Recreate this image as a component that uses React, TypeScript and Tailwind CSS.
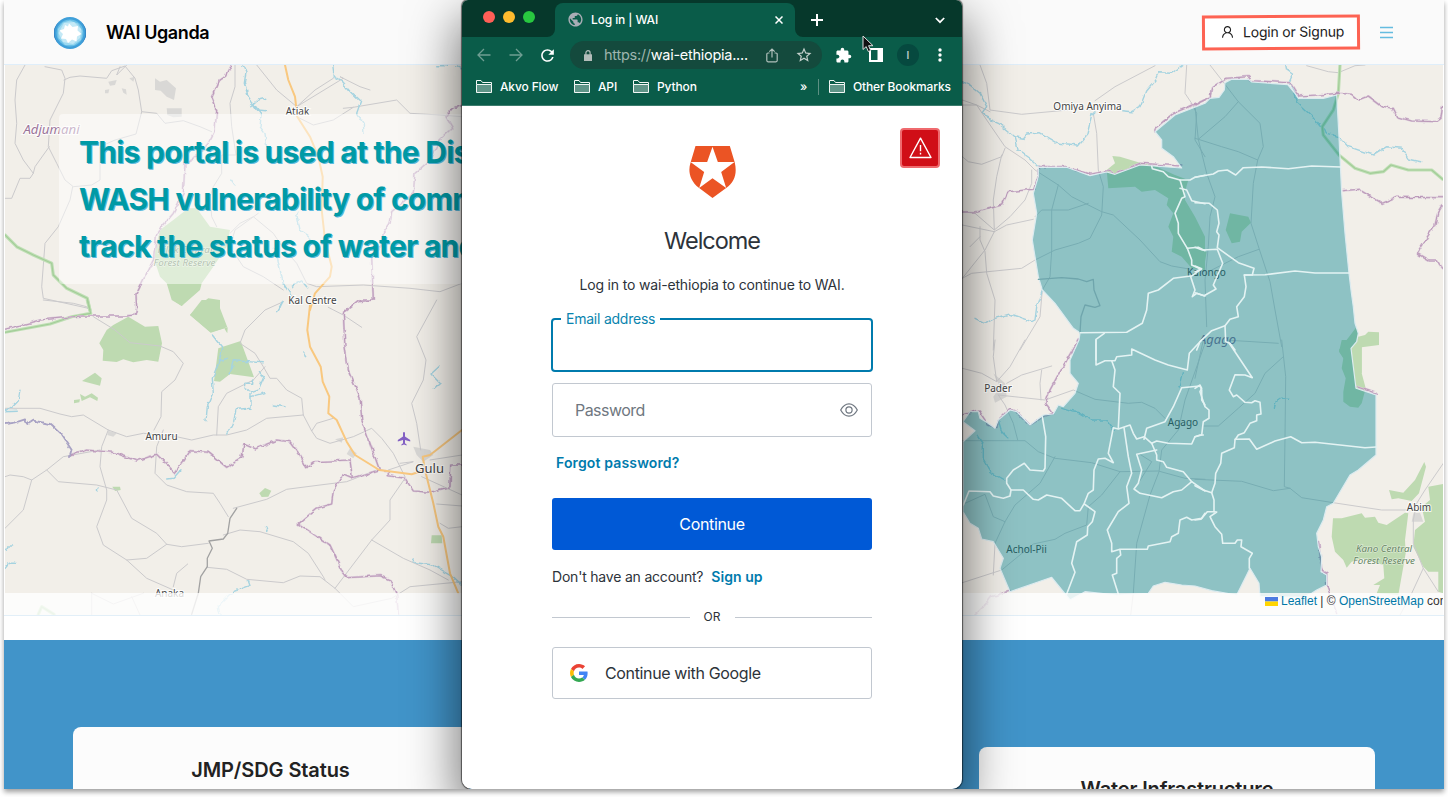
import React from "react";
import { MdExtension, MdRefresh, MdStarBorder, MdPublic } from "react-icons/md";
import { AiOutlineUser } from "react-icons/ai";

/* Map geometry: every tile has its origin in page pixels and stores points at three units per pixel. */
type Origin = [number, number];
const A: Origin = [0, 0];
const B: Origin = [0, 300];
const C: Origin = [955, 60];
const D: Origin = [1195, 60];
const E: Origin = [955, 340];
const F: Origin = [1195, 340];

const at = ([ox, oy]: Origin, pts: string) =>
  pts
    .trim()
    .split(/\s+/)
    .map((p) => {
      const [x, y] = p.split(",").map(Number);
      return `${(ox + x / 3).toFixed(1)},${(oy + y / 3).toFixed(1)}`;
    })
    .join(" ");

type Shape = [Origin, string];

const forests: Shape[] = [
  [A, "565,625 590,625 630,680 690,690 680,740 640,800 605,850 600,870 545,918 515,900 500,850 480,830 460,770 480,690 520,660"],
  [A, "590,920 625,895 660,900 660,965 682,1000 683,982 632,998 570,945 600,915"],
  [B, "570,45 605,0 660,0 660,25 682,82 632,97"],
  [B, "520,0 560,0 545,18"],
  [B, "340,75 385,50 435,80 475,78 486,130 475,185 440,180 400,187 370,178 350,186 308,182 310,150 298,130 320,90"],
  [B, "655,145 722,123 762,232 690,222 660,245 642,243"],
  [B, "246,243 285,218 305,235 300,257"],
  [B, "240,282 255,290 275,280 294,293 292,303 270,292 245,303"],
  [B, "222,300 240,298 238,307 222,310"],
  [B, "778,580 795,564 814,572 805,590 785,591"],
  [B, "337,560 360,560 362,570 345,573"],
  [B, "1295,706 1325,706 1327,730 1293,730"],
  [C, "455,330 480,310 472,288 495,290 520,298 555,308 600,318 660,345 700,360 690,395 690,420 720,470 750,530 750,630 710,625 680,590 650,575 655,530 640,500 655,460 635,435 640,415 600,390 560,395 540,380 460,385"],
  [D, "0,510 20,515 22,550 10,570 35,575 30,605 0,625"],
  [D, "105,460 160,470 168,488 140,515 135,545 110,550 92,510"],
  [D, "432,870 485,800 490,830 510,825 520,815 552,817 552,855 500,862 500,940 470,940"],
  [F, "440,0 500,0 500,100 512,145 500,190 490,203 465,200 445,185 445,155 452,115 440,85 445,55 432,35"],
  [F, "582,450 625,458 660,420 688,366 693,380 672,460 650,483 610,475 590,478"],
  [F, "414,535 440,535 500,520 510,533 540,530 550,548 575,555 630,518 640,520 630,600 632,640 610,765 545,760 555,735 535,735 568,715 565,675 500,655 470,665 455,683 445,660 420,635 410,590"],
  [F, "680,500 705,480 700,440 745,432 745,760 730,755 730,695 700,695 685,680 655,620 660,570 690,545"],
];

const builtUp: Shape[] = [
  [A, "465,235 480,245 500,240 528,265 522,300 500,290 482,272 465,270"],
  [A, "500,325 545,325 545,350 520,352 502,345"],
  [A, "325,245 350,240 345,255 330,257"],
  [A, "315,270 328,268 325,280 315,280"],
  [A, "365,265 378,268 380,284 370,278"],
  [A, "388,235 405,230 400,245"],
  [B, "1240,440 1290,450 1300,465 1270,485 1250,465"],
  [B, "1050,445 1070,460 1060,475 1040,462"],
  [B, "325,392 350,400 340,410 322,405"],
  [B, "1005,418 1030,412 1025,428"],
  [E, "115,100 150,130 155,170 120,188 115,170 135,140"],
  [F, "655,520 675,518 685,545 650,545"],
];

const roads: Shape[] = [
  [A, "75,195 50,240 45,300 50,370 45,430 70,480 100,520 90,535 60,535 35,595 15,595"],
  [A, "135,200 185,210 195,235 190,280 150,360 145,440 170,490 195,540 220,560 275,555 300,540 300,440 345,420 408,402 425,335 415,270 405,235 375,198 335,212 320,235 240,228 210,232 192,240"],
  [A, "425,335 470,340 495,370 550,362 600,380 635,395"],
  [A, "148,440 130,465 105,500 100,520"],
  [A, "218,560 210,600 175,680 135,730 125,860 130,895 265,925"],
  [A, "705,195 705,260 690,310 695,380 708,465 665,465 665,520 640,560 630,590 635,650 650,680"],
  [A, "770,195 830,270 890,320 1030,235 1020,230 1080,260 1110,270"],
  [A, "1030,325 1060,322 1190,300 1230,340 1320,345 1386,350"],
  [A, "890,320 945,270 1000,235"],
  [A, "890,350 940,375 1000,360 1060,322"],
  [A, "690,700 720,670 760,650 820,700 850,745 890,790 920,850 950,860 1090,855 1230,865 1320,875 1386,850"],
  [A, "775,640 705,690 690,740 730,800 790,830 850,870"],
  [A, "360,200 350,225 380,195"],
  [B, "850,5 795,30 735,90 720,130 765,160 790,200 810,235 830,235 860,270 905,295 910,345 800,355 740,390 680,405 640,405 575,420 520,408 430,400 380,410 325,390 250,345 215,350 180,342 120,325 15,325"],
  [B, "910,345 935,393 950,370 1000,355"],
  [B, "935,393 950,415 990,430 1060,410 1115,385 1145,415 1180,460 1200,500 1215,530"],
  [B, "130,0 220,10 260,20 280,50 345,90 390,128 480,138 520,155 550,190 525,240 485,275 483,350 462,390"],
  [B, "490,390 470,440 465,520 500,555 560,575 640,580 660,610 685,650"],
  [B, "795,200 760,240 680,280 655,320 650,405"],
  [B, "325,390 305,440 300,500 320,570 320,600 290,680 310,735 380,780 440,835 520,870"],
  [B, "300,450 190,470 140,510 95,540 70,530 30,525 15,530"],
  [B, "95,540 70,630 15,685"],
  [B, "140,510 175,545 290,555 350,570 395,655 470,700 500,733 545,740 625,730"],
  [B, "380,780 440,775 500,733"],
  [B, "670,705 720,690 780,695 880,725 925,760 970,830 975,840"],
  [B, "620,802 680,808 740,838 850,848 900,828 960,830 1005,865 1115,720 1170,660 1170,600 1215,535"],
  [B, "1115,720 1210,775 1290,810 1345,840"],
  [B, "1005,865 1060,920 1175,895 1230,860 1386,845"],
  [B, "700,625 800,598 860,568 960,555 1040,545 1130,510"],
  [B, "1310,0 1250,110 1278,180 1270,240 1235,310 1250,370 1262,450"],
  [B, "985,22 1030,45 1085,82"],
  [B, "520,860 530,820 563,792"],
  [B, "275,880 275,945"],
  [B, "275,880 340,912 430,880"],
  [B, "395,890 420,945"],
  [B, "1290,480 1386,465"],
  [B, "1265,530 1386,585"],
  [B, "1200,490 1240,485 1165,510"],
  [B, "1310,612 1386,618"],
  [B, "1320,670 1345,685 1386,680"],
  [C, "75,15 95,70 105,150 200,163 340,150"],
  [C, "420,122 480,80 600,17"],
  [C, "22,120 65,135 95,180 150,260 210,300 240,330 310,375 350,410 440,455 475,465 555,540 615,605 650,618 750,635"],
  [C, "22,135 65,135 95,150 105,155"],
  [C, "22,290 40,305 80,313 140,290 150,265"],
  [C, "140,285 125,350 115,420 118,510 60,460 22,455"],
  [C, "118,515 90,570 22,655"],
  [C, "118,515 155,495 235,478"],
  [C, "118,510 165,470 210,420 230,370 230,330"],
  [C, "22,495 118,515"],
  [C, "75,500 75,540 90,575 95,640 120,720 115,870"],
  [C, "22,655 50,640 200,625 240,600 300,570 370,550 405,535 440,465 445,380 430,330 425,220 415,160"],
  [C, "310,375 290,450 290,570 285,650 262,690 255,770 195,870"],
  [C, "240,470 260,450 340,450 400,430"],
  [C, "695,15 690,100 710,130 725,160 720,240 750,290"],
  [C, "45,560 75,530"],
  [D, "45,15 80,60 130,125 195,190 205,260 188,300 175,370 168,490 192,565 225,665 240,750 260,860"],
  [D, "130,125 90,170 10,238 0,235"],
  [D, "10,238 80,260 130,275 188,300"],
  [D, "192,568 130,590 50,630"],
  [D, "0,140 10,238 35,340 60,410 45,470 40,560 30,660 35,800"],
  [D, "335,17 400,35 430,38 480,17 510,15"],
  [D, "90,840 250,850"],
  [F, "260,0 272,110 270,290 268,440 285,445 320,473 415,488 560,510 640,510"],
  [F, "0,418 140,424 235,452 285,445"],
  [F, "265,50 210,100 180,160 130,205 70,258 25,258"],
  [F, "25,0 0,115"],
  [F, "745,370 690,450 665,490 655,540 655,610 685,685 730,755"],
  [F, "685,685 650,760 615,825"],
  [E, "22,85 80,100 125,125 115,50 120,0"],
  [E, "125,125 165,80 210,0"],
  [E, "155,130 200,105 290,78"],
  [E, "260,90 255,130 258,180"],
  [E, "130,165 270,180 355,150 420,178 520,190 560,187 600,205 630,235"],
  [E, "130,165 150,195 175,250 188,300"],
  [E, "22,302 210,302 250,335 300,355 410,368 495,395 610,393 690,415 750,418"],
  [E, "300,350 255,430 180,495 150,545 120,610 115,705"],
  [E, "30,490 90,463 115,530 150,545"],
  [E, "495,395 440,465 400,500 395,555 330,580 300,598 235,612 140,690 22,728"],
  [E, "750,10 690,180 670,270 620,330 612,395 585,465 545,610 535,760 527,825"],
  [E, "550,430 590,365 550,340"],
];

const rivers: Shape[] = [
  [A, "728,195 738,215 733,250 745,290 765,320 783,345 780,380 795,400 800,440 812,470"],
  [A, "752,320 775,300 797,295"],
  [A, "760,310 775,330 797,332"],
  [A, "995,195 1000,230 1025,245 1055,280 1082,305 1070,340 1090,370 1092,398"],
  [A, "692,540 705,558"],
  [A, "820,745 832,770 838,800 850,850 875,890"],
  [A, "875,860 890,850 905,843 920,860"],
  [A, "850,905 840,925"],
  [A, "890,640 900,690 930,710 945,740"],
  [A, "1310,197 1340,197"],
  [A, "1370,197 1386,205"],
  [B, "845,10 830,35"],
  [B, "637,105 668,145 655,190 637,235 640,280 622,320 618,362"],
  [B, "655,182 682,175"],
  [B, "690,220 700,182 790,188"],
  [B, "780,215 793,235 780,265 755,275 735,265 738,250 755,250 755,240"],
  [B, "753,272 753,325 708,328 700,370 683,402"],
  [B, "753,290 795,278"],
  [B, "820,315 855,320"],
  [B, "912,155 917,170"],
  [B, "60,268 55,300 35,320 15,335 52,334"],
  [B, "1320,197 1293,222 1320,250 1303,265"],
  [B, "503,537 520,535 540,512"],
  [B, "292,573 297,563"],
  [B, "797,692 800,680"],
  [B, "15,752 25,738 38,738"],
  [B, "15,803 25,790 47,790"],
  [B, "660,943 655,920 670,905 700,875 750,857 745,842"],
  [B, "1235,775 1245,788 1300,795 1325,810 1360,830 1386,855"],
  [C, "22,65 45,75 75,100 95,140 85,155 95,175 130,190 180,230 190,270 225,295 250,318"],
  [C, "180,230 205,235 215,222 255,218 310,250 370,255 395,225 410,165 420,155"],
  [C, "500,152 530,155 555,140 575,90 600,60 610,38 650,40 680,17"],
  [C, "60,775 90,790 120,775 165,762 230,785 240,780 245,740 262,690"],
  [D, "272,15 275,30 293,43 282,68 300,100 307,125 350,165 395,220 432,230 460,260 535,285 575,260 620,265 640,297 677,305"],
  [E, "320,205 350,215 375,218 410,240 455,240 475,270"],
  [E, "65,285 85,315 85,360 105,395 150,420"],
  [E, "130,240 140,275 155,290"],
  [E, "685,98 675,140"],
  [F, "235,205 240,185 255,175 285,175"],
];

const greenBorders: Shape[] = [
  [A, "15,705 50,740 100,765 155,790 160,825 200,865 262,895 270,930"],
  [B, "262,0 272,40 215,50 150,72 15,97"],
  [D, "435,15 430,100 415,150 382,200 385,225 432,285 480,325 525,340 565,335 588,315 640,330 710,330 743,358"],
  [B, "115,943 125,920 162,943"],
];

const purpleBorders: Shape[] = [
  [A, "695,195 680,225 655,245 635,290 650,330 645,390 625,430 590,470 555,490 550,580 520,640 470,700 460,780 430,840 408,885 410,925 405,945 383,947"],
  [B, "383,48 245,48 120,60 15,88"],
  [A, "1386,315 1360,325 1338,350 1358,385 1320,420 1290,480 1245,520 1240,580 1175,635 1170,670 1150,700 1145,735 1115,770 1120,900 1075,905"],
  [B, "1120,0 1080,0 1030,40 1035,140 1045,210 1080,290 1085,360 1110,430 1138,508"],
  [B, "210,468 260,450 340,457 410,483 470,463 525,518 545,490 570,452 625,457 680,502 725,475 732,433 765,447 830,420 870,425 900,465 920,503 945,485 1050,480 1057,533 1138,510 1165,515 1165,527 1215,535 1240,573 1290,577 1350,560 1352,495 1386,495"],
  [B, "1057,533 1030,522 1000,570 995,612 950,625 895,672 990,735 1030,820 1040,833 1140,827 1170,840 1190,885 1195,945"],
  [C, "22,456 70,455 140,435 160,395 235,388 250,350 250,320 335,320 405,343 455,333 480,340 555,310 680,318"],
  [C, "600,215 600,205 655,160 750,120"],
  [D, "0,135 45,110 50,85 95,55 160,50 170,62 285,68 310,108 370,105 430,100 470,103 490,120 520,108 560,138 592,145 605,170 650,183 725,185 738,175 743,135"],
  [D, "445,392 490,388 562,430 605,412 743,413"],
  [D, "743,435 728,460 720,495 665,580 700,600 725,600 743,625"],
  [E, "370,0 320,85 285,150 272,190 295,220 265,230 225,255 185,215 165,205 130,240 125,265 100,255 70,210 22,225"],
  [E, "60,825 95,790 110,770 165,752"],
  [F, "485,140 543,160"],
  [F, "370,600 380,690 395,695 395,735 425,820"],
];

const region = [
  at(C, "250,322 335,322 405,347 455,336 480,343 555,315 680,324 655,290 620,265 620,240 600,215 660,165 750,130"),
  at(D, "45,115 72,112 88,90 90,68 110,58 160,58 170,66 278,74 300,100 310,115 385,115 425,105 432,230 440,400 450,520 462,640 468,690 475,740 480,790 490,820 485,845 468,865"),
  at(F, "483,145 543,165 543,345 490,390 465,405 415,490 395,500 385,540 365,580 370,620 380,650 378,695 395,705 395,735 365,750 350,760 320,772 195,770 192,730 165,685 155,705 125,765 50,752 0,738"),
  at(E, "680,735 630,727 595,738 580,760 485,765 390,755 345,780 290,712 165,755 135,685 145,655 115,605 80,597 70,565 45,550 24,515 24,305 60,272 24,245 45,215 70,215 75,235 100,250 120,265 130,240 165,210 185,215 225,255 265,225 295,222 310,195 325,200 360,160 370,130 345,100 345,60 372,0"),
  at(C, "375,818 355,805 300,730 262,690 250,650 240,590 232,540 245,460 235,400 250,350"),
].join(" ");

const subCounties: Shape[] = [
  [C, "590,318 592,326 625,335 640,350 675,360 705,360 720,352 750,346"],
  [D, "0,352 55,342 70,333 97,330 122,345 145,323 200,321 280,326 350,318 437,321"],
  [C, "675,360 690,410 680,415 660,460 670,490 670,520 697,565 710,600 710,615 738,628 707,650 720,690 712,710 725,700 750,708"],
  [C, "675,385 695,390 710,422 750,431"],
  [D, "0,428 43,430 67,450 72,490 65,515 72,525 67,563 130,608 177,625 172,645 148,645 153,680 148,710 125,740 130,770 105,778 90,797 50,812 15,845 5,870"],
  [C, "697,565 730,562 750,572"],
  [D, "0,562 22,570 67,568 83,610 55,675 63,687 27,707 0,698"],
  [D, "0,618 20,626 0,636"],
  [D, "148,645 210,644 300,633 360,639 462,639"],
  [D, "90,797 92,845 105,850 120,870"],
  [C, "707,648 655,655 610,690 580,700 575,750 562,790 515,817 375,818"],
  [C, "448,820 423,838 423,900"],
  [E, "423,0 423,75 450,62 480,62 485,50 530,45 530,27 600,60 640,75 697,90 703,40 735,5 740,0"],
  [E, "470,62 480,90 475,140 495,160 490,265"],
  [E, "262,230 272,290 270,385 265,393 225,390 208,370 175,390 155,415 155,430 168,450 165,468 145,475 115,468 105,455 42,453 25,495"],
  [E, "168,450 205,450 235,478 250,480 275,465 320,475 360,512 375,512 388,490 400,460 415,450 417,390 430,357 450,355 475,368 460,340 475,263 490,267 525,255 535,280 545,297 567,290 590,310"],
  [E, "507,263 520,350 530,400 515,440 522,490 490,515 457,570 470,610 470,635 495,628 577,628 580,618 645,605 650,590 670,580 675,540 695,532 710,540 740,535 750,520"],
  [E, "495,630 497,645 485,655 485,700 472,705 490,762"],
  [E, "388,492 420,515 412,545 398,560 397,585 365,605 350,670 360,697 335,762"],
  [E, "567,298 575,265 630,245 655,200 680,143 735,138 740,150 740,180 750,195"],
  [E, "590,310 605,303 640,310 710,312 720,290 735,285 745,285"],
  [F, "0,145 15,135 20,145 15,155 30,200 42,210 42,235 25,245 20,285 0,290"],
  [E, "590,310 605,345 605,360 625,365 635,382 685,395 710,425 750,453"],
  [E, "605,330 545,343 560,390 550,430 537,447 555,460 620,473 655,455 680,450 710,425"],
  [F, "0,437 25,450 50,458 57,480 57,515 37,515 18,538 0,540"],
  [F, "103,10 172,113 150,105 120,104 103,150 115,170 125,165 150,187 170,188 180,182 195,187 198,222 185,225 185,242 165,250 148,278 130,285 120,300 118,323 80,340 77,370 62,400 60,430 50,458"],
  [F, "120,298 163,297 185,328 240,303 287,290 320,308 360,307 510,323 543,321"],
  [F, "57,515 65,516 45,530 60,560 80,583 83,610 120,610 127,600 140,600 138,620 172,640 163,655 163,685"],
];

const darkLines: Shape[] = [
  [C, "250,658 320,653 370,657 395,665 415,658 417,690 435,737 420,742 390,735 378,770 375,818"],
];

function Lines({ items, className, rough }: { items: Shape[]; className: string; rough?: boolean }) {
  return (
    <g
      className={className}
      fill="none"
      strokeLinejoin="round"
      strokeLinecap="round"
      filter={rough ? "url(#rough)" : undefined}
    >
      {items.map(([o, p], i) => (
        <polyline key={i} points={at(o, p)} />
      ))}
    </g>
  );
}

function Areas({ items, className }: { items: Shape[]; className: string }) {
  return (
    <g className={className}>
      {items.map(([o, p], i) => (
        <polygon key={i} points={at(o, p)} />
      ))}
    </g>
  );
}

function BaseMap() {
  return (
    <svg className="block h-full w-full" viewBox="5 65 1438 550">
      <defs>
        <filter id="rough" filterUnits="userSpaceOnUse" x="0" y="60" width="1448" height="560" colorInterpolationFilters="sRGB">
          <feTurbulence type="fractalNoise" baseFrequency="0.14" numOctaves="2" seed="4" result="n" />
          <feDisplacementMap in="SourceGraphic" in2="n" scale="5" xChannelSelector="R" yChannelSelector="G" />
        </filter>
      </defs>
      <rect x="5" y="65" width="1438" height="550" className="fill-[#f2efe9]" />
      <Areas items={forests} className="fill-[#bedab1]" />
      <Areas items={builtUp} className="fill-[#d9d8d6]" />
      <Lines items={roads} className="stroke-[#cbcacc] stroke-[1]" />
      <Lines rough items={rivers} className="stroke-[#a5d3e0] stroke-[1.4]" />
      <Lines items={greenBorders} className="stroke-[#bfdfb5] stroke-[3.2]" />
      <Lines items={greenBorders} className="stroke-[#a3cd98] stroke-[1.2]" />
      <Lines rough items={purpleBorders} className="stroke-[#dccbda] stroke-[2.2]" />
      <Lines rough items={purpleBorders} className="stroke-[#bc9bba] stroke-[1.1]" />
      <Lines
        rough
        items={[[B, "15,372 45,368 75,358 85,372 100,362 150,372 185,405 215,450 210,468"]]}
        className="stroke-[#a8a2c4] stroke-[1.800]"
      />
      <Lines
        items={[[B, "710,625 690,655 683,700 670,717 627,723 637,745 622,775 622,800 602,830 595,880 575,943"]]}
        className="stroke-[#a2a2a2] stroke-[1.300]"
      />
      <Lines
        items={[
          [A, "855,195 865,240 885,290 892,350 930,410 955,470 968,530 965,630 975,720 995,800 990,830 945,880 930,930"],
          [B, "930,15 922,90 930,140 962,200 968,245 988,290 985,340 1010,360 1040,425 1065,465 1138,510 1235,523 1275,510 1268,470 1290,465 1386,390"],
          [B, "1275,510 1300,610 1315,680 1330,710 1350,820 1375,880"],
        ]}
        className="stroke-[#f9c87f] stroke-[2]"
      />
      <g
        className="fill-[#444] stroke-white/80 stroke-2 font-['Noto_Sans',sans-serif] text-[10px] [paint-order:stroke]"
        textAnchor="middle"
      >
        <text x="297.500" y="114.500">Atiak</text>
        <text x="312.500" y="304">Kal Centre</text>
        <text x="161.500" y="439.500">Amuru</text>
        <text x="169.500" y="596.500">Anaka</text>
        <text x="1087.500" y="109.500">Omiya Anyima</text>
        <text x="998" y="392">Pader</text>
        <text x="1419" y="511">Abim</text>
        <text x="429.500" y="473" className="text-[13px]">Gulu</text>
        <text x="51.500" y="134" className="fill-[#9a7399] text-[13.200px] italic">Adjumani</text>
      </g>
      <g
        className="fill-[#64845f] stroke-white/60 stroke-1 font-['Noto_Sans',sans-serif] text-[9.800px] italic [paint-order:stroke]"
        textAnchor="middle"
      >
        <text x="185" y="252.500">Kilak Central</text>
        <text x="184.500" y="265.500">Forest Reserve</text>
        <text x="1384" y="552">Kano Central</text>
        <text x="1384" y="564">Forest Reserve</text>
      </g>
      <g className="fill-[#444] font-['Noto_Sans',sans-serif] text-[10px]" textAnchor="middle">
        <text x="1206.500" y="276">Kalongo</text>
        <text x="1183" y="426">Agago</text>
        <text x="1026.500" y="553">Achol-Pii</text>
        <text x="1217.500" y="343.500" className="fill-[#7d6a92] text-[13px] italic">Agago</text>
      </g>
      <path
        className="fill-[#8461c4]"
        d="M404 432 c.7 0 1 .7 1 1.500 v3 l5.200 3.500 v1.500 l-5.200-1.600 v3.300 l1.600 1.200 v1 l-2.600-.8 l-2.600 .8 v-1 l1.600-1.200 v-3.300 l-5.200 1.600 v-1.500 l5.200-3.500 v-3 c0-.8 .3-1.500 1-1.500 z"
      />
      <polygon points={region} className="fill-[#00848f]/41 stroke-[#dcebf0] stroke-[1.200]" strokeLinejoin="round" />
      <Lines items={darkLines} className="stroke-[#6fa5ac] stroke-[1.300]" />
      <Lines items={subCounties} className="stroke-[#e4f3f3] stroke-[1.600]" />
    </svg>
  );
}

function WaiLogo() {
  return (
    <svg className="mt-[2px] h-8 w-8" viewBox="0 0 32 32">
      <circle cx="16" cy="16" r="16" fill="#3f9fd9" />
      <path d="M5 5 A15.500 15.500 0 0 0 5 27 A14 14 0 0 1 5 5 M27 27 A15.500 15.500 0 0 0 27 5 A14 14 0 0 1 27 27" fill="#1f6fb5" />
      <circle cx="16" cy="16" r="13.500" fill="#69bfe6" />
      <path d="M16 3.500 L24 6.500 L28.500 14 L27 23 L20 28 L11 28 L4.500 21 L4 12 L9 5.500 Z" fill="#9bd8f0" />
      <path d="M10 6 L20 5 L27 12 L26 21 L19 27 L9 25 L4.500 16 Z" fill="#c4e9f6" />
      <path
        d="M15 6.500 L18.500 10 L24 9 L23.500 13.500 L27.500 17 L23 19.500 L22.500 24.500 L18 22.500 L14 26 L12 22 L7 21.500 L9 17 L5.500 13.500 L10 12 L11 8 L14 9.500 Z"
        fill="#fff"
      />
    </svg>
  );
}

function FolderIcon() {
  return (
    <svg className="h-[13px] w-4 shrink-0" viewBox="0 0 16 13" fill="none" stroke="#f2f7f5">
      <path d="M.5 4.500 H15.500 V12.500 H.5 Z" fill="#fff" fillOpacity=".35" />
      <path d="M.5 4.500 V.5 H5 L6.500 2.500 H15.500 V4.500" />
    </svg>
  );
}

function TabStrip() {
  return (
    <div className="flex h-[37px] bg-[#06382b]">
      <div className="flex w-[93px] gap-2 pt-[10.500px] pl-[21px]">
        <span className="h-3 w-3 rounded-full bg-[#ff5f57]" />
        <span className="h-3 w-3 rounded-full bg-[#febc2e]" />
        <span className="h-3 w-3 rounded-full bg-[#28c840]" />
      </div>
      <div className="relative mt-[3px] flex w-[240px] items-center rounded-t-lg bg-[#0a5c49] pr-3 pb-px pl-3 text-white">
        <svg className="absolute bottom-0 -left-2 h-2 w-2 fill-[#0a5c49]" viewBox="0 0 8 8">
          <path d="M8 0 V8 H0 A8 8 0 0 0 8 0 Z" />
        </svg>
        <svg className="absolute -right-2 bottom-0 h-2 w-2 fill-[#0a5c49]" viewBox="0 0 8 8">
          <path d="M0 0 V8 H8 A8 8 0 0 1 0 0 Z" />
        </svg>
        <MdPublic className="-mr-px h-[17px] w-[17px] text-[#a8adb5]" />
        <span className="ml-2 flex-1 text-[12px] font-medium tracking-[-0.120px]">Log in | WAI</span>
        <svg className="h-2 w-2" viewBox="0 0 8 8" fill="none" stroke="#fff" strokeWidth="1.500">
          <path d="M.5 .5 L7.500 7.500 M7.500 .5 L.5 7.500" />
        </svg>
      </div>
      <svg className="mt-[14px] ml-4 h-3 w-3" viewBox="0 0 12 12" stroke="#fff" strokeWidth="2">
        <path d="M6 0 V12 M0 6 H12" />
      </svg>
      <svg className="mt-[17px] mr-[17px] ml-auto h-[7px] w-[10px]" viewBox="0 0 10 7" fill="none" stroke="#fff" strokeWidth="1.700">
        <path d="M.8 1 L5 5.200 L9.200 1" />
      </svg>
    </div>
  );
}

function Toolbar() {
  return (
    <div className="flex h-9 items-center bg-[#0a5c49] pl-[15px]">
      <svg className="h-[14px] w-[14px]" viewBox="0 0 14 14" fill="none" stroke="#6f9e92" strokeWidth="1.300">
        <path d="M13.500 7 H1.500 M7 1 L1 7 L7 13" />
      </svg>
      <svg className="ml-[18px] h-[14px] w-[14px]" viewBox="0 0 14 14" fill="none" stroke="#6f9e92" strokeWidth="1.300">
        <path d="M.5 7 H12.500 M7 1 L13 7 L7 13" />
      </svg>
      <MdRefresh className="mr-px ml-[15px] h-[19px] w-[19px] text-white" />
      <div className="ml-3 flex h-7 w-[252px] items-center rounded-full bg-[#144a3d] pl-[14px]">
        <svg className="h-[11px] w-2" viewBox="0 0 8 11">
          <path d="M0 4.300 H8 V11 H0 Z" fill="#b4bdba" />
          <path d="M1.900 5 V2.800 A2.100 2.100 0 0 1 6.100 2.800 V5" fill="none" stroke="#b4bdba" strokeWidth="1.200" />
        </svg>
        <span className="ml-3 w-[146px] text-[14.500px] tracking-[-0.270px] whitespace-nowrap text-white">
          <span className="text-[#9db5ae]">https://</span>wai-ethiopia....
        </span>
        <svg className="ml-4 h-[15px] w-3" viewBox="0 0 12 15" fill="none" stroke="#b0c0bb" strokeWidth="1.200">
          <path d="M3.500 5 H2 Q.8 5 .8 6.200 V12.600 Q.8 13.800 2 13.800 H10 Q11.200 13.800 11.200 12.600 V6.200 Q11.200 5 10 5 H8.500 M6 9.500 V1.200 M3.300 3.700 L6 1 L8.700 3.700" />
        </svg>
        <MdStarBorder className="ml-[17px] h-[18px] w-[18px] text-[#c3cfcb]" />
      </div>
      <MdExtension className="mr-px ml-[13px] h-[17px] w-[17px] text-white" />
      <svg className="ml-4 h-[14px] w-[14px]" viewBox="0 0 14 14">
        <path d="M0 0 H14 V14 H0 Z M2 2 V12 H8.500 V2 Z" fill="#fff" fillRule="evenodd" />
      </svg>
      <span className="ml-[14px] flex h-[22px] w-[22px] items-center justify-center rounded-full bg-[#06493f] text-[10px] font-semibold text-[#b9cbc8]">
        I
      </span>
      <svg className="ml-[19px] h-[14px] w-1 fill-white" viewBox="0 0 4 14">
        <circle cx="2" cy="2" r="1.700" />
        <circle cx="2" cy="7" r="1.700" />
        <circle cx="2" cy="12" r="1.700" />
      </svg>
    </div>
  );
}

function BookmarksBar() {
  return (
    <div className="flex h-[33px] items-center border-b border-[#3c7c6d] bg-[#0a5c49] pb-[5px] pl-[14px] text-[12px] font-medium tracking-[-0.140px] whitespace-nowrap text-white">
      <FolderIcon />
      <span className="ml-2 w-[58px]">Akvo Flow</span>
      <span className="w-4" />
      <FolderIcon />
      <span className="ml-2 w-[19px]">API</span>
      <span className="w-4" />
      <FolderIcon />
      <span className="ml-2 w-[40px]">Python</span>
      <span className="ml-[103px] w-[9px]">»</span>
      <span className="ml-[9px] h-4 w-px bg-[#5d9083]" />
      <span className="w-[10px]" />
      <FolderIcon />
      <span className="ml-2">Other Bookmarks</span>
    </div>
  );
}

function LoginForm() {
  return (
    <div className="relative flex h-[683px] flex-col items-center bg-white pt-10 text-[#2d333a]">
      <div className="absolute top-[22px] right-[22px] flex h-10 w-10 items-center justify-center rounded-[4px] border-2 border-[#ef6a6e] bg-[#d00e17]">
        <svg className="h-[22px] w-[23px]" viewBox="0 0 23 22" fill="none" stroke="#fff" strokeWidth="1.400" strokeLinejoin="round">
          <path d="M11.500 1.200 L22 20.500 H1 Z" />
          <path d="M11.500 8 V14.200 M11.500 15.800 V17.600" />
        </svg>
      </div>
      <svg className="h-[52px] w-[47px]" viewBox="446 78 140 156">
        <path d="M465 78 H568 L583 128 C590 160 583 185 557 204 L516 234 L476 204 C445 180 443 150 450 128 Z" fill="#eb5424" />
        <path d="M516 80 L532 126 H582 L542 156 L557 204 L516 175 L476 204 L491 156 L450 126 H500 Z" fill="#fff" />
      </svg>
      <h1 className="mt-[27px] text-[23.500px] leading-8 tracking-[-1.050px]">Welcome</h1>
      <p className="mt-[18px] text-[14px] leading-5 tracking-[-0.170px]">Log in to wai-ethiopia to continue to WAI.</p>
      <div className="relative mt-[23px] h-[54px] w-[322px] rounded-[4px] border-2 border-[#007bad]">
        <span className="absolute -top-[11px] left-[8px] bg-white px-[5px] text-[14px] leading-5 tracking-[-0.230px] whitespace-nowrap text-[#0a84ae]">
          Email address
        </span>
      </div>
      <div className="mt-[11px] flex h-[54px] w-80 items-center justify-between rounded-[3px] border border-[#c2c8d0] pr-[13px] pl-[22px] text-[16px] text-[#6f7780]">
        <span className="tracking-[-0.550px]">Password</span>
        <svg className="h-[14px] w-[18px]" viewBox="0 0 18 14" fill="none" stroke="#6f7780" strokeWidth="1.200">
          <path d="M.7 7 Q4 .8 9 .8 Q14 .8 17.300 7 Q14 13.200 9 13.200 Q4 13.200 .7 7 Z" />
          <circle cx="9" cy="7" r="3.100" />
        </svg>
      </div>
      <div className="mt-4 w-80 pl-1 text-[14px] leading-5 font-semibold tracking-[0.140px] text-[#007bad]">Forgot password?</div>
      <div className="mt-[25px] flex h-[52px] w-80 items-center justify-center rounded-[3px] bg-[#0059d6] text-[16px] tracking-[-0.350px] text-white">
        Continue
      </div>
      <div className="mt-[17px] flex w-80 gap-2 text-[14px] leading-5">
        <span className="tracking-[-0.200px]">Don't have an account?</span>
        <span className="font-semibold tracking-[0.050px] text-[#007bad]">Sign up</span>
      </div>
      <div className="mt-5 flex w-80 items-center text-[12px] leading-5">
        <span className="h-px flex-1 bg-[#c2c8d0]" />
        <span className="w-[45px] text-center">OR</span>
        <span className="h-px flex-1 bg-[#c2c8d0]" />
      </div>
      <div className="mt-5 flex h-[52px] w-80 items-center rounded-[3px] border border-[#c2c8d0] pl-[17px] text-[16px]">
        <svg className="h-[18px] w-[18px]" viewBox="0 0 48 48">
          <path fill="#EA4335" d="M24 9.500c3.540 0 6.710 1.220 9.210 3.600l6.850-6.850C35.900 2.380 30.470 0 24 0 14.620 0 6.510 5.380 2.560 13.220l7.980 6.190C12.430 13.720 17.740 9.500 24 9.500z" />
          <path fill="#4285F4" d="M46.980 24.550c0-1.570-.15-3.090-.38-4.550H24v9.020h12.940c-.58 2.960-2.260 5.480-4.780 7.180l7.730 6c4.510-4.180 7.090-10.360 7.090-17.650z" />
          <path fill="#FBBC05" d="M10.530 28.590c-.48-1.450-.76-2.990-.76-4.590s.27-3.140.76-4.590l-7.980-6.190C.92 16.460 0 20.120 0 24c0 3.880.92 7.540 2.560 10.780l7.970-6.190z" />
          <path fill="#34A853" d="M24 48c6.480 0 11.930-2.130 15.890-5.810l-7.730-6c-2.150 1.450-4.920 2.300-8.160 2.300-6.260 0-11.570-4.220-13.470-9.910l-7.980 6.190C6.510 42.620 14.620 48 24 48z" />
        </svg>
        <span className="ml-[17px] tracking-[-0.360px]">Continue with Google</span>
      </div>
    </div>
  );
}

function BrowserWindow() {
  return (
    <div className="absolute top-0 left-[458px] h-[789px] w-[500px] rounded-t-[6px] rounded-b-[10px] shadow-[0_0_1px_1px_rgba(0,0,0,0.55),0_22px_50px_4px_rgba(0,0,0,0.55)]">
      <div className="flex h-full flex-col overflow-hidden rounded-t-[6px] rounded-b-[10px]">
        <TabStrip />
        <Toolbar />
        <BookmarksBar />
        <LoginForm />
      </div>
      <svg className="absolute top-[35px] left-[400px] h-[18px] w-3" viewBox="0 0 12 18">
        <path d="M1 1 V14.500 L4.200 11.600 L6.300 16.500 L8.700 15.500 L6.600 10.700 H11 Z" fill="#111" stroke="#ddd" strokeWidth="1" />
      </svg>
    </div>
  );
}

export default function App() {
  return (
    <div className="h-[797px] w-[1448px] overflow-hidden bg-white pl-1 font-[Inter,sans-serif]">
      <div className="relative h-[789px] w-[1440px] overflow-hidden bg-white shadow-[0_3px_5px_rgba(0,0,0,0.38)]">
        <header className="flex h-[65px] items-center border-b border-[#dfeefa] bg-[#fafafa] pl-[50px]">
          <WaiLogo />
          <span className="ml-5 text-[18px] font-semibold tracking-[-0.400px] text-black">WAI Uganda</span>
          <div className="mr-5 ml-auto flex h-[35px] w-[158px] -rotate-[0.400deg] items-center border-[3px] border-[#fd6353] bg-white pb-[2px] pl-[15px]">
            <AiOutlineUser className="h-[15px] w-[15px] text-[#222]" />
            <span className="ml-2 text-[14px] tracking-[-0.200px] whitespace-nowrap text-[#222]">Login or Signup</span>
          </div>
          <svg className="mr-[51px] h-[13px] w-[13px]" viewBox="0 0 13 13" stroke="#64bce0" strokeWidth="1.500">
            <path d="M0 1.500 H13 M0 6.500 H13 M0 11.500 H13" />
          </svg>
        </header>
        <section className="relative ml-px h-[550px] w-[1438px] overflow-hidden">
          <BaseMap />
          <div className="absolute top-[49px] left-[54px] h-[170px] w-[600px] rounded-[4px] bg-white/50 pt-[14.600px] pl-5 text-[30px] leading-[47.300px] font-bold tracking-[-0.740px] whitespace-nowrap text-[#009aa5] [text-shadow:1px_1px_0_#5cb9dc]">
            <p>This portal is used at the Dist</p>
            <p>WASH vulnerability of comm</p>
            <p>track the status of water and</p>
          </div>
          <div className="absolute bottom-0 left-0 flex h-[22px] w-full bg-white/80 pl-[1260px] font-['Liberation_Sans',sans-serif] text-[12px] leading-4 whitespace-pre text-[#333]">
            <svg className="mt-[4px] mr-[3px] h-[9px] w-[13px] shrink-0" viewBox="0 0 12 8" preserveAspectRatio="none">
              <path fill="#4c7be1" d="M0 0h12v4H0z" />
              <path fill="#ffd500" d="M0 4h12v4H0z" />
            </svg>
            <span className="text-[#0078a8]">Leaflet</span> | © <span className="text-[#0078a8]">OpenStreetMap</span> con
          </div>
        </section>
        <div className="h-[25px] border-t border-[#e2eff8] bg-white" />
        <section className="flex h-[149px] items-start justify-between bg-[#4194c9] pr-[69px] pl-[68.500px]">
          <div className="mt-[87px] flex h-[62px] w-[396px] justify-center rounded-t-lg bg-[#fcfcfc] pt-[27px] text-[20px] leading-8 font-semibold tracking-[-0.100px] text-[#222]">
            JMP/SDG Status
          </div>
          <div className="mt-[107px] flex h-[42px] w-[396px] justify-center overflow-hidden rounded-t-lg bg-[#fcfcfc] pt-[26px] text-[20px] leading-8 font-semibold tracking-[-0.150px] text-[#222]">
            Water Infrastructure
          </div>
        </section>
        <BrowserWindow />
      </div>
    </div>
  );
}
